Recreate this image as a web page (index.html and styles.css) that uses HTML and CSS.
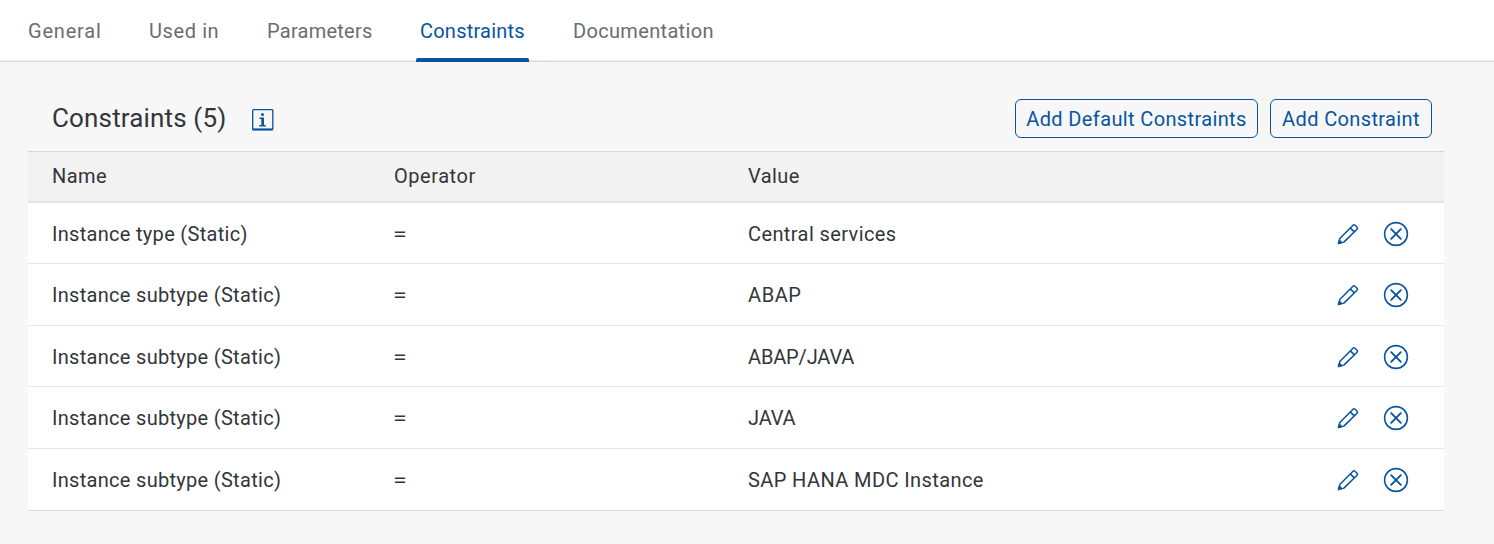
FILE: index.html
```html
<!DOCTYPE html>
<html lang="en">
<head>
<meta charset="utf-8">
<title>Constraints</title>
<link rel="stylesheet" href="styles.css">
</head>
<body>
<svg class="sprite" width="0" height="0" aria-hidden="true">
  <symbol id="edit" viewBox="0 0 22 22">
    <path d="M1.300 20.600 3 15.200 16 2.200Q17 1.200 18 2.200L20 4.200Q21 5.200 20 6.200L6.900 19.100 1.300 20.600M13.300 4.900 17.300 8.900" fill="none" stroke="currentColor" stroke-width="1.500" stroke-linejoin="round"/>
    <path d="M.6 21.400 2.300 16.200 5.900 19.800Z" fill="currentColor"/>
  </symbol>
  <symbol id="decline" viewBox="0 0 26 26">
    <circle cx="13" cy="13" r="11.400" fill="none" stroke="currentColor" stroke-width="1.600"/>
    <path d="M8.200 8.200 17.800 17.800M17.800 8.200 8.200 17.800" fill="none" stroke="currentColor" stroke-width="1.900" stroke-linecap="round"/>
  </symbol>
</svg>
<nav class="tabs">
  <a class="tab general">General</a>
  <a class="tab used">Used in</a>
  <a class="tab parameters">Parameters</a>
  <a class="tab constraints active">Constraints</a>
  <a class="tab documentation">Documentation</a>
</nav>
<main class="panel">
  <header class="toolbar">
    <h1 class="title">Constraints (5)</h1>
    <svg class="info" width="22" height="22" viewBox="0 0 22 22">
      <rect x=".7" y=".7" width="20.100" height="20.100" rx=".8" fill="none" stroke="currentColor" stroke-width="1.300"/>
      <path d="M.5 20.300H21" stroke="currentColor" stroke-width="1.800"/>
      <circle cx="10.500" cy="5.500" r="1.500" fill="currentColor"/>
      <path d="M7.500 8.500H12V16H13.700V17.500H7.300V16H9.300V10H7.500Z" fill="currentColor"/>
    </svg>
    <div class="actions">
      <button class="button default">Add Default Constraints</button>
      <button class="button single">Add Constraint</button>
    </div>
  </header>
  <section class="table">
    <div class="row head"><span>Name</span><span class="operator">Operator</span><span>Value</span></div>
    <div class="row low"><span class="name">Instance type (Static)</span><span class="op">=</span><span>Central services</span><svg class="edit"><use href="#edit"/></svg><svg class="decline"><use href="#decline"/></svg></div>
    <div class="row"><span class="name">Instance subtype (Static)</span><span class="op">=</span><span class="abap">ABAP</span><svg class="edit"><use href="#edit"/></svg><svg class="decline"><use href="#decline"/></svg></div>
    <div class="row low"><span class="name">Instance subtype (Static)</span><span class="op">=</span><span class="java">ABAP/JAVA</span><svg class="edit"><use href="#edit"/></svg><svg class="decline"><use href="#decline"/></svg></div>
    <div class="row"><span class="name">Instance subtype (Static)</span><span class="op">=</span><span class="java">JAVA</span><svg class="edit"><use href="#edit"/></svg><svg class="decline"><use href="#decline"/></svg></div>
    <div class="row"><span class="name">Instance subtype (Static)</span><span class="op">=</span><span>SAP HANA MDC Instance</span><svg class="edit"><use href="#edit"/></svg><svg class="decline"><use href="#decline"/></svg></div>
  </section>
</main>
</body>
</html>
```
FILE: styles.css
```css
* { box-sizing: border-box; }
body {
  margin: 0;
  background: #f7f7f7;
  color: #32363a;
  font: 20px/24px Roboto, "Liberation Sans", sans-serif;
  letter-spacing: .4px;
  white-space: nowrap;
}
.sprite { display: block; }
.tabs {
  display: flex;
  height: 62px;
  padding-left: 24px;
  background: #fff;
  box-shadow: inset 0 -1px #d9d9d9, inset 0 -2px #ececec;
  color: #6a6d70;
}
.tab { padding: 19px 4px 0; height: 62px; }
.general { width: 121px; letter-spacing: .8px; }
.used { width: 118px; letter-spacing: .6px; }
.parameters { width: 153px; letter-spacing: .25px; }
.constraints { width: 113px; margin-right: 40px; letter-spacing: .22px; }
.documentation { letter-spacing: .33px; }
.active {
  display: flex;
  flex-direction: column;
  justify-content: space-between;
  color: #0854a0;
}
.active::after {
  content: "";
  height: 4px;
  margin: 0 -4px;
  border-radius: 2px 2px 0 0;
  background: #0854a0;
}
.panel { padding: 37px 50px 0 28px; }
.toolbar {
  display: flex;
  height: 52px;
  padding: 0 12px 0 24px;
  align-items: flex-start;
}
.title { width: 199px; margin: 4px 0 0; font-size: 26px; line-height: 30px; font-weight: 400; letter-spacing: .15px; }
.info { margin: 10px 0 0 1px; color: #0854a0; }
.actions { display: flex; gap: 12px; margin-left: auto; }
.button {
  height: 39px;
  padding: 1px 0 0;
  border: 1px solid #0854a0;
  border-radius: 6px;
  background: transparent;
  color: #0854a0;
  font: inherit;
  letter-spacing: .37px;
}
.default { width: 243px; }
.single { width: 162px; }
.table {
  display: grid;
  grid-template-rows: 52px 61px 62px 61px 62px 62px;
  background: #fff;
}
.row {
  display: grid;
  grid-template-columns: 342px 354px 588px 47px 26px;
  align-items: center;
  padding-left: 24px;
  border-bottom: 1px solid #e5e5e5;
}
.row:last-child { border-bottom-color: #d9d9d9; }
.low span { padding-top: 2px; }
.low svg { margin-top: 1px; }
.name { letter-spacing: .3px; }
.operator { letter-spacing: .55px; }
.op { transform: translateX(-1px) scaleX(1.25); transform-origin: left; }
.abap { letter-spacing: .6px; }
.java { letter-spacing: -.15px; }
.head {
  padding-bottom: 1px;
  background: #f2f2f2;
  border-top: 1px solid #d9d9d9;
  border-bottom: 2px solid #e4e4e4;
}
.edit { width: 22px; height: 22px; margin-left: 1px; color: #0854a0; }
.decline { width: 26px; height: 26px; color: #0854a0; }
```
